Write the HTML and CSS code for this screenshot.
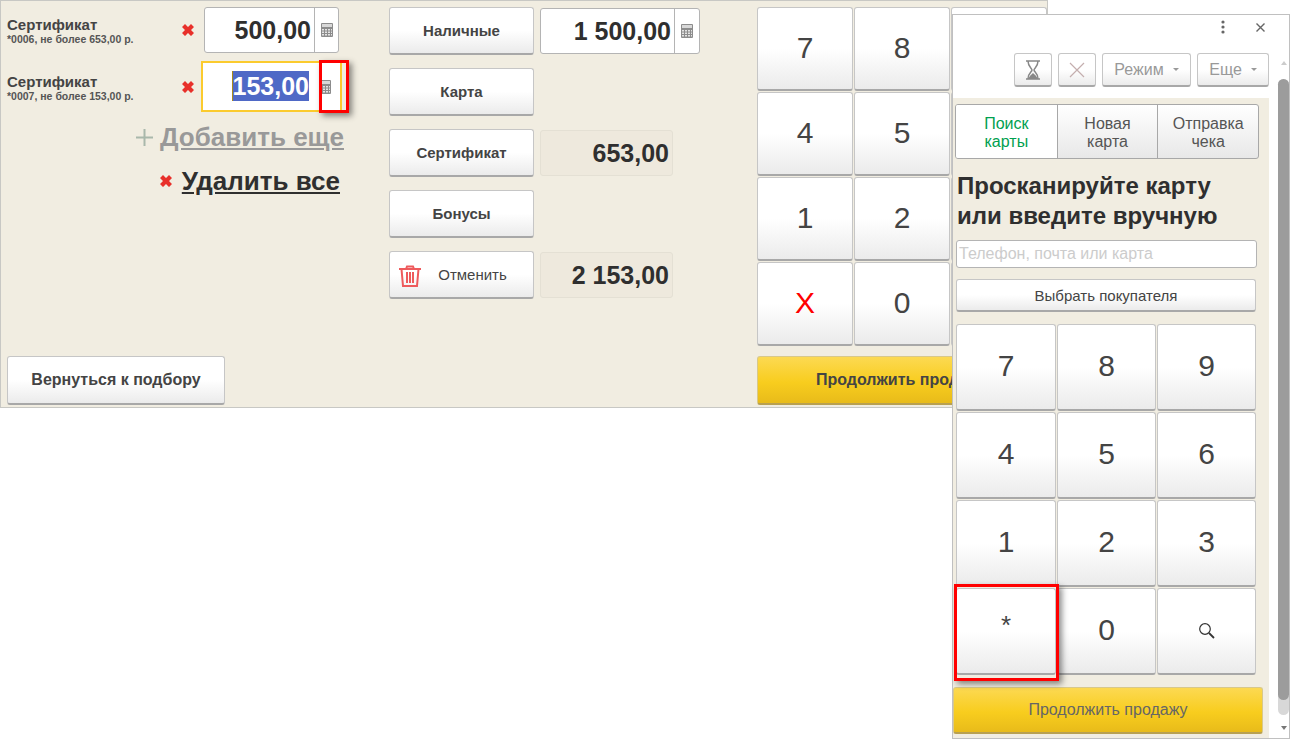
FILE: index.html
```html
<!DOCTYPE html>
<html lang="en">
<head>
	<meta charset="UTF-8">
	<title>Оплата</title>
	<link rel="stylesheet" href="styles.css">
</head>
<body>
	<svg class="defs" width="0" height="0">
		<symbol id="calc" viewBox="0 0 12 14">
			<rect x="0" y="0" width="12" height="14" rx="1" fill="#8c8c8c"/>
			<rect x="1" y="1" width="10" height="3" fill="#d8d8d8"/>
			<path d="M1 6h2v1.500H1zM4 6h2v1.500H4zM7 6h2v1.500H7zM10 6h1v1.500h-1zM1 8.500h2V10H1zM4 8.500h2V10H4zM7 8.500h2V10H7zM10 8.500h1V10h-1zM1 11h2v1.500H1zM4 11h2v1.500H4zM7 11h2v1.500H7zM10 11h1v1.500h-1z" fill="#e4e4e4"/>
		</symbol>
		<symbol id="del" viewBox="0 0 14 14">
			<path d="M1 4 L4 1 L7 4 L10 1 L13 4 L10 7 L13 10 L10 13 L7 10 L4 13 L1 10 L4 7 Z" fill="#e8302a"/>
		</symbol>
	</svg>

	<div class="screen">
		<div class="top">
			<div class="certs">
				<div class="cert">
					<div class="cert-name">
						<b>Сертификат</b>
						<small>*0006, не более 653,00 р.</small>
					</div>
					<svg class="del"><use href="#del"/></svg>
					<div class="field">
						<span class="val">500,00</span>
						<span class="calc"><svg><use href="#calc"/></svg></span>
					</div>
				</div>
				<div class="cert cert-active">
					<div class="cert-name">
						<b>Сертификат</b>
						<small>*0007, не более 153,00 р.</small>
					</div>
					<svg class="del"><use href="#del"/></svg>
					<div class="field field-active">
						<span class="val"><span class="sel">153,00</span></span>
						<span class="calc"><svg><use href="#calc"/></svg></span>
					</div>
				</div>
				<div class="link-row link-add">
					<svg class="plus" viewBox="0 0 17 17"><path d="M7.500 0h2v7.500H17v2H9.500V17h-2V9.500H0v-2h7.500z" fill="#a9b8ab"/></svg>
					<a href="javascript:;">Добавить еще</a>
				</div>
				<div class="link-row link-del">
					<svg class="del"><use href="#del"/></svg>
					<a href="javascript:;">Удалить все</a>
				</div>
			</div>

			<div class="pays">
				<div class="pay">
					<a class="btn pay-btn" href="javascript:;">Наличные</a>
					<div class="field field-cash">
						<span class="val">1 500,00</span>
						<span class="calc"><svg><use href="#calc"/></svg></span>
					</div>
				</div>
				<div class="pay">
					<a class="btn pay-btn" href="javascript:;">Карта</a>
				</div>
				<div class="pay">
					<a class="btn pay-btn" href="javascript:;">Сертификат</a>
					<div class="total">653,00</div>
				</div>
				<div class="pay">
					<a class="btn pay-btn" href="javascript:;">Бонусы</a>
				</div>
				<div class="pay">
					<a class="btn pay-btn pay-cancel" href="javascript:;">
						<svg class="trash" viewBox="0 0 24 22" fill="none" stroke="#ee5a5c" stroke-width="2">
							<path d="M1 4h22M8 4l1-2.500h6L16 4"/>
							<path d="M3.500 4l1.500 17h14l1.500-17"/>
							<path d="M9 7v11M12 7v11M15 7v11"/>
						</svg>
						Отменить
					</a>
					<div class="total">2 153,00</div>
				</div>
			</div>

			<div class="keys">
				<a class="btn key" href="javascript:;">7</a>
				<a class="btn key" href="javascript:;">8</a>
				<a class="btn key" href="javascript:;">9</a>
				<a class="btn key" href="javascript:;">4</a>
				<a class="btn key" href="javascript:;">5</a>
				<a class="btn key" href="javascript:;">6</a>
				<a class="btn key" href="javascript:;">1</a>
				<a class="btn key" href="javascript:;">2</a>
				<a class="btn key" href="javascript:;">3</a>
				<a class="btn key key-x" href="javascript:;">X</a>
				<a class="btn key" href="javascript:;">0</a>
				<a class="btn key" href="javascript:;">,</a>
			</div>
		</div>
		<div class="bottom">
			<a class="btn back" href="javascript:;">Вернуться к подбору</a>
			<a class="btn yellow go" href="javascript:;">Продолжить продажу</a>
		</div>
	</div>

	<div class="mark mark-calc"></div>

	<div class="win">
		<div class="win-head">
			<svg class="kebab" viewBox="0 0 4 14"><circle cx="2" cy="2" r="1.600"/><circle cx="2" cy="7" r="1.600"/><circle cx="2" cy="12" r="1.600"/></svg>
			<svg class="close" viewBox="0 0 9 9"><path d="M.5.5l8 8M8.500.5l-8 8" stroke="#666" stroke-width="1.400" fill="none"/></svg>
		</div>
		<div class="win-tools">
			<a class="btn tool tool-ico" href="javascript:;">
				<svg viewBox="0 0 16 20" width="16" height="20"><path d="M1 1h14M1 19h14M3 1c0 6 4 7 4 9s-4 3-4 9M13 1c0 6-4 7-4 9s4 3 4 9" fill="none" stroke="#888" stroke-width="1.500"/><path d="M3.500 19c.5-3 3-4.500 4.500-6 1.500 1.500 4 3 4.500 6z" fill="#888"/></svg>
			</a>
			<a class="btn tool tool-ico" href="javascript:;">
				<svg viewBox="0 0 16 16" width="16" height="16"><path d="M1 1l14 14M15 1L1 15" stroke="#c4aeae" stroke-width="1.200" fill="none"/></svg>
			</a>
			<a class="btn tool tool-mode" href="javascript:;">Режим<i class="caret"></i></a>
			<a class="btn tool tool-more" href="javascript:;">Еще<i class="caret"></i></a>
		</div>
		<div class="win-body">
			<div class="tabs">
				<a class="tab tab-on" href="javascript:;">Поиск<br>карты</a>
				<a class="tab" href="javascript:;">Новая<br>карта</a>
				<a class="tab" href="javascript:;">Отправка<br>чека</a>
			</div>
			<h2 class="scan">Просканируйте карту<br>или введите вручную</h2>
			<div class="search">Телефон, почта или карта</div>
			<a class="btn pick" href="javascript:;">Выбрать покупателя</a>
			<div class="keys keys-win">
				<a class="btn key" href="javascript:;">7</a>
				<a class="btn key" href="javascript:;">8</a>
				<a class="btn key" href="javascript:;">9</a>
				<a class="btn key" href="javascript:;">4</a>
				<a class="btn key" href="javascript:;">5</a>
				<a class="btn key" href="javascript:;">6</a>
				<a class="btn key" href="javascript:;">1</a>
				<a class="btn key" href="javascript:;">2</a>
				<a class="btn key" href="javascript:;">3</a>
				<a class="btn key key-star" href="javascript:;">*</a>
				<a class="btn key" href="javascript:;">0</a>
				<a class="btn key" href="javascript:;">
					<svg viewBox="0 0 17 17" width="17" height="17" fill="none" stroke="#333"><circle cx="7" cy="7" r="5.300" stroke-width="1.200"/><path d="M11 11l5 5" stroke-width="1.800"/></svg>
				</a>
			</div>
			<a class="btn yellow go-win" href="javascript:;">Продолжить продажу</a>
		</div>
		<div class="scroll">
			<i class="arrow-up"></i>
			<div class="scroll-track"><div class="scroll-thumb"></div></div>
			<i class="arrow-down"></i>
		</div>
		<div class="mark mark-star"></div>
	</div>
</body>
</html>
```

FILE: styles.css
```css
*{ margin: 0; padding: 0; box-sizing: border-box; list-style: none; text-decoration: none; }
html,body{ background: #fff; }
body{ font-family: "Liberation Sans", Arial, sans-serif; color: #444; width: 1292px; height: 740px; overflow: hidden; position: relative; }
.defs{ position: absolute; }

.screen{ width: 1048px; height: 408px; background: #f1ede1; border: 1px solid #c8c8c4; display: flex; flex-direction: column; }
.top{ display: flex; padding-top: 6px; height: 355px; }
.bottom{ display: flex; justify-content: space-between; padding: 0 0 0 6px; }

.btn{ display: flex; align-items: center; justify-content: center; color: #444; background: linear-gradient(#fff 50%, #ebebeb); border: 1px solid #c6c6c6; border-bottom: 2px solid #a8a8a8; border-radius: 3px; }

/* certs */
.certs{ width: 388px; }
.cert{ display: flex; align-items: center; height: 46px; margin-bottom: 8px; }
.cert-active{ height: 51px; margin-bottom: 0; }
.cert-name{ width: 180px; padding-left: 6px; }
.cert-name b{ display: block; font-size: 15px; line-height: 17px; margin-top: 1px; }
.cert-name small{ display: block; font-size: 10.500px; font-weight: bold; line-height: 12px; color: #555; }
.del{ width: 14px; height: 14px; flex: none; }
.cert .del{ margin-right: 9px; }

.field{ width: 135px; height: 46px; display: flex; background: #fff; border: 1px solid #b4b4b4; border-radius: 3px; color: #2f2f2f; font-size: 25px; font-weight: bold; }
.field .val{ flex: 1; text-align: right; line-height: 44px; padding-right: 3px; }
.calc{ width: 24px; border-left: 1px solid #b4b4b4; display: flex; align-items: center; justify-content: center; }
.calc svg{ width: 12px; height: 14px; }
.field-active{ width: 141px; height: 51px; margin-left: -3px; border: 2px solid #fbcb2e; border-radius: 0; }
.field-active .val{ line-height: 47px; padding-right: 0; }
.field-active .calc{ border-left: 0; width: 31px; }
.sel{ display: inline-block; background: #4f69c6; color: #fff; height: 30px; line-height: 30px; border-left: 1px solid #a8891c; }

.link-row{ display: flex; justify-content: flex-end; align-items: center; width: 343px; }
.link-row a{ font-weight: bold; }
.link-add{ margin-top: 9px; height: 32px; gap: 7px; }
.link-add a{ color: #999; font-size: 26px; text-decoration: underline; }
.plus{ width: 17px; height: 17px; }
.link-del{ margin-top: 12px; height: 32px; gap: 9px; padding-right: 4px; }
.link-del a{ color: #2f2f2f; font-size: 26px; text-decoration: underline; }

/* pays */
.pays{ width: 368px; }
.pay{ display: flex; gap: 6px; height: 48px; margin-bottom: 13px; }
.pay-btn{ width: 145px; font-size: 15px; font-weight: bold; }
.pay-cancel{ position: relative; font-weight: normal; padding-left: 22px; }
.trash{ position: absolute; left: 8px; top: 13px; width: 24px; height: 22px; }
.pay .field-cash{ width: 160px; height: 46px; margin-top: 1px; }
.field-cash .calc{ width: 25px; }
.total{ width: 133px; height: 46px; margin-top: 1px; background: #eee9dd; border: 1px solid #e4e0d4; border-radius: 3px; text-align: right; padding-right: 3px; line-height: 44px; font-size: 25px; font-weight: bold; color: #2f2f2f; }

/* keys */
.keys{ display: grid; grid-template-columns: repeat(3, 96px); grid-auto-rows: 84px; gap: 1px; height: 338px; }
.key{ font-size: 30px; color: #444; padding-bottom: 2px; }
.key-x{ color: #f00; }

.back{ width: 218px; height: 49px; font-size: 16px; font-weight: bold; }
.yellow{ background: linear-gradient(#fcd952, #f8cd1e 55%, #e8bb1a); border: 1px solid #d8c88a; border-bottom: 2px solid #b8a050; }
.go{ width: 290px; height: 49px; font-size: 16px; font-weight: bold; }

/* red marks */
.mark{ position: absolute; border: 3px solid #f00; box-shadow: 3px 3px 6px rgba(0,0,0,.45); }
.mark-calc{ left: 319px; top: 60px; width: 30px; height: 53px; }
.mark-star{ left: 1px; top: 569px; width: 105px; height: 97px; }

/* window */
.win{ position: absolute; left: 952px; top: 14px; width: 338px; height: 725px; background: #fff; border: 1px solid #c0c0c0; }
.win-head{ height: 24px; display: flex; justify-content: flex-end; align-items: center; gap: 31px; padding: 0 24px 0 0; }
.kebab{ width: 4px; height: 14px; fill: #666; }
.close{ width: 9px; height: 9px; }
.win-tools{ display: flex; gap: 6px; justify-content: flex-end; width: 316px; margin-top: 14px; height: 34px; }
.tool{ height: 34px; font-size: 16px; color: #999; }
.tool-ico{ width: 38px; }
.tool-mode{ width: 89px; }
.tool-more{ width: 72px; }
.caret{ width: 0; height: 0; margin-left: 9px; border: 3px solid transparent; border-top-color: #999; border-bottom: 0; }

.win-body{ width: 316px; height: 640px; margin-top: 11px; background: #f1ede1; padding: 6px 0 0 3px; }
.tabs{ display: flex; width: 304px; height: 55px; margin-left: -1px; border: 1px solid #a8a8a8; border-radius: 3px; background: linear-gradient(#fff, #e8e8e8); overflow: hidden; }
.tab{ width: 100px; flex: auto; text-align: center; font-size: 16px; line-height: 18px; padding-top: 10px; color: #555; border-left: 1px solid #a8a8a8; }
.tab:first-child{ border-left: 0; }
.tab-on{ background: #fff; color: #00a050; }
.scan{ font-size: 24px; line-height: 30px; font-weight: bold; color: #2f2f2f; margin-top: 12px; margin-left: 1px; }
.search{ width: 301px; height: 28px; margin-top: 9px; background: #fff; border: 1px solid #b4b4b4; border-radius: 3px; font-size: 16px; line-height: 26px; color: #ccc; padding-left: 2px; }
.pick{ width: 300px; height: 33px; margin-top: 11px; font-size: 15px; }
.keys-win{ grid-template-columns: 100px 99px 99px; grid-auto-rows: 87px; gap: 1px; height: 351px; margin-top: 12px; }
.key-star{ padding-bottom: 12px; font-size: 26px; }
.go-win{ width: 310px; height: 47px; margin: 12px 0 0 -3px; font-size: 16px; color: #666; }

.scroll{ position: absolute; left: 325px; top: 40px; width: 11px; height: 680px; display: flex; flex-direction: column; align-items: center; }
.scroll-track{ width: 11px; height: 636px; margin-top: 14px; background: #d8d8d8; border-radius: 6px; }
.scroll-thumb{ height: 621px; background: #9c9c9c; border-radius: 6px; }
.arrow-up{ border: 3px solid transparent; border-bottom: 4px solid #ccc; border-top: 0; margin-top: 6px; }
.arrow-down{ border: 3px solid transparent; border-top: 4px solid #777; border-bottom: 0; margin-top: 11px; }
```
